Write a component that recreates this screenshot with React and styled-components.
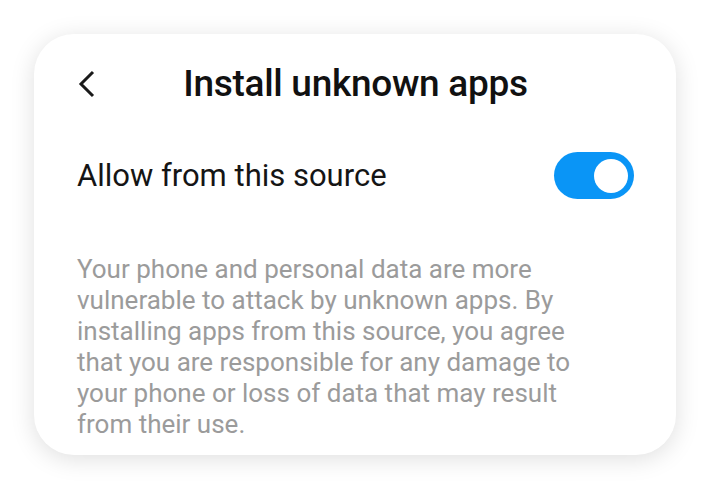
import React from 'react';
import styled, { createGlobalStyle } from 'styled-components';

const Global = createGlobalStyle`
  body {
    margin: 0;
    background: #fff;
    font-family: Roboto, "Noto Sans", sans-serif;
  }
`;

const Page = styled.div`
  width: 710px;
  height: 490px;
  padding: 34px;
  box-sizing: border-box;
`;

const Card = styled.div`
  width: 642px;
  height: 421px;
  box-sizing: border-box;
  background: #fff;
  border-radius: 40px;
  box-shadow: 0 4px 24px rgba(0, 0, 0, 0.13);
  padding: 28px 42px 0 43px;
  display: flex;
  flex-direction: column;
`;

const Header = styled.div`
  display: grid;
  grid-template-columns: 1fr auto 1fr;
  align-items: center;
  height: 42px;
`;

const Back = styled.button`
  border: 0;
  background: none;
  padding: 0;
  justify-self: start;
  display: flex;
`;

const Title = styled.h1`
  margin: 0;
  font-size: 37px;
  font-weight: 500;
  color: #111;
  letter-spacing: -0.3px;
`;

const Row = styled.div`
  display: flex;
  justify-content: space-between;
  align-items: center;
  margin-top: 48px;
`;

const Label = styled.span`
  font-size: 31px;
  color: #151515;
`;

const Toggle = styled.div`
  width: 80px;
  height: 47px;
  border-radius: 24px;
  background: ${p => (p.on ? '#0a95f6' : '#ccc')};
  display: flex;
  align-items: center;
  justify-content: ${p => (p.on ? 'flex-end' : 'flex-start')};
  padding: 0 6px;
  box-sizing: border-box;
`;

const Knob = styled.div`
  width: 34px;
  height: 34px;
  border-radius: 50%;
  background: #fff;
`;

const Note = styled.p`
  margin: 55px 0 0;
  max-width: 500px;
  font-size: 26px;
  line-height: 31px;
  color: #9b9b9b;
`;

export default function App() {
  return (
    <Page>
      <Global />
      <Card>
        <Header>
          <Back aria-label="Back">
            <svg width="20" height="30" viewBox="0 0 20 30">
              <path d="M16 3 L4 15 L16 27" fill="none" stroke="#1a1a1a" strokeWidth="3" />
            </svg>
          </Back>
          <Title>Install unknown apps</Title>
          <span />
        </Header>
        <Row>
          <Label>Allow from this source</Label>
          <Toggle on>
            <Knob />
          </Toggle>
        </Row>
        <Note>
          Your phone and personal data are more vulnerable to attack by unknown apps. By
          installing apps from this source, you agree that you are responsible for any damage
          to your phone or loss of data that may result from their use.
        </Note>
      </Card>
    </Page>
  );
}
